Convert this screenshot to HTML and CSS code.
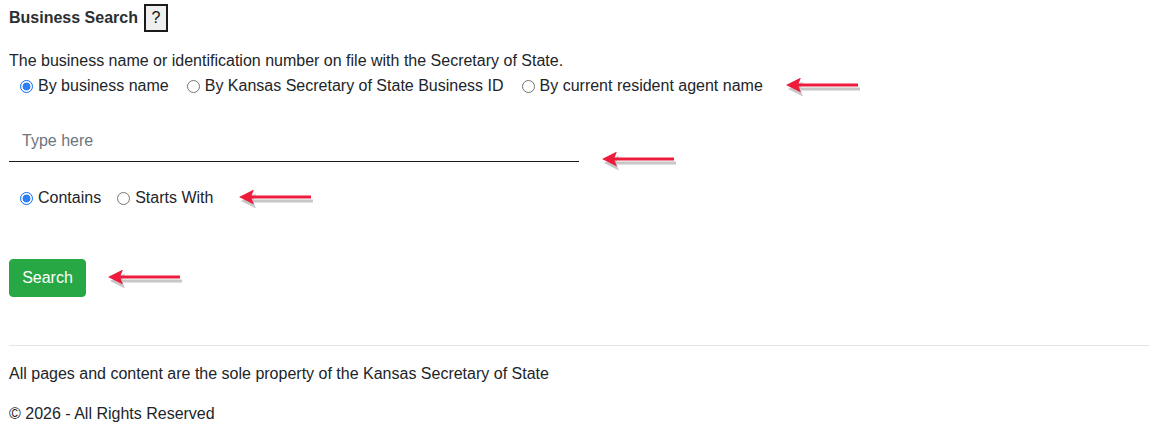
FILE: index.html
```html
<!DOCTYPE html>
<html>
<head>
<meta charset="utf-8">
<link rel="stylesheet" href="styles.css">
</head>
<body>
<main class="page">
  <div class="title-row">
    <span class="title">Business Search</span>
    <button class="help">?</button>
  </div>
  <p class="desc">The business name or identification number on file with the Secretary of State.</p>
  <div class="radio-row type-row">
    <label class="opt"><span class="radio checked"></span>By business name</label>
    <label class="opt"><span class="radio"></span>By Kansas Secretary of State Business ID</label>
    <label class="opt"><span class="radio"></span>By current resident agent name</label>
    <svg class="arrow arrow-1" width="76" height="20" viewBox="0 0 76 20"><g transform="translate(2,3)" fill="#9a9a9a" opacity="0.55"><rect x="10" y="6.5" width="62" height="3"/><polygon points="0,8 15,0.5 12,8 15,15.5"/></g><g fill="#ee1c3c"><rect x="10" y="5.5" width="62" height="3"/><polygon points="0,7 15,-0.5 12,7 15,14.5"/></g></svg>
  </div>
  <div class="input-row">
    <input class="search-input" type="text" placeholder="Type here">
    <svg class="arrow arrow-2" width="76" height="20" viewBox="0 0 76 20"><g transform="translate(2,3)" fill="#9a9a9a" opacity="0.55"><rect x="10" y="6.5" width="62" height="3"/><polygon points="0,8 15,0.5 12,8 15,15.5"/></g><g fill="#ee1c3c"><rect x="10" y="5.5" width="62" height="3"/><polygon points="0,7 15,-0.5 12,7 15,14.5"/></g></svg>
  </div>
  <div class="radio-row match-row">
    <label class="opt"><span class="radio checked"></span>Contains</label>
    <label class="opt"><span class="radio"></span>Starts With</label>
    <svg class="arrow arrow-3" width="76" height="20" viewBox="0 0 76 20"><g transform="translate(2,3)" fill="#9a9a9a" opacity="0.55"><rect x="10" y="6.5" width="62" height="3"/><polygon points="0,8 15,0.5 12,8 15,15.5"/></g><g fill="#ee1c3c"><rect x="10" y="5.5" width="62" height="3"/><polygon points="0,7 15,-0.5 12,7 15,14.5"/></g></svg>
  </div>
  <div class="button-row">
    <button class="search-btn">Search</button>
    <svg class="arrow arrow-4" width="76" height="20" viewBox="0 0 76 20"><g transform="translate(2,3)" fill="#9a9a9a" opacity="0.55"><rect x="10" y="6.5" width="62" height="3"/><polygon points="0,8 15,0.5 12,8 15,15.5"/></g><g fill="#ee1c3c"><rect x="10" y="5.5" width="62" height="3"/><polygon points="0,7 15,-0.5 12,7 15,14.5"/></g></svg>
  </div>
  <footer class="footer">
    <p>All pages and content are the sole property of the Kansas Secretary of State</p>
    <p>© 2026 - All Rights Reserved</p>
  </footer>
</main>
</body>
</html>
```
FILE: styles.css
```css
* { box-sizing: border-box; }
html, body { margin: 0; padding: 0; background: #fff; }
body {
  font-family: "Liberation Sans", Arial, sans-serif;
  font-size: 16px;
  color: #212529;
}
.page { padding: 0 9px; }
.title-row {
  display: flex;
  align-items: center;
  height: 36px;
}
.title {
  font-weight: bold;
  font-size: 16px;
  color: #2b2f33;
  margin-right: 6px;
}
.help {
  width: 24px;
  height: 28px;
  padding: 0;
  border: 2px solid #1a1a1a;
  border-radius: 0;
  background: #efefef;
  font-family: "Liberation Sans", Arial, sans-serif;
  font-size: 16px;
  color: #111;
}
.desc {
  margin: 16px 0 0 0;
  line-height: 18px;
}
.radio-row {
  display: flex;
  align-items: center;
  padding-left: 11px;
  height: 22px;
}
.type-row { margin-top: 5px; }
.opt {
  display: flex;
  align-items: center;
  margin-right: 18px;
  line-height: 20px;
}
.radio {
  width: 13px;
  height: 13px;
  border-radius: 50%;
  border: 1px solid #767676;
  background: #fff;
  margin-right: 5px;
  flex: none;
}
.radio.checked {
  border: 1px solid #0b6cf3;
  background: radial-gradient(circle, #2f80f6 0 3.6px, #fff 4.3px);
}
.arrow { display: block; flex: none; }
.arrow-1 { margin-left: 5px; margin-top: 4px; }
.input-row {
  display: flex;
  align-items: flex-end;
  margin-top: 23px;
}
.search-input {
  width: 570px;
  height: 42px;
  border: none;
  border-bottom: 1.5px solid #1a1a1a;
  outline: none;
  padding: 0 13px;
  font-family: "Liberation Sans", Arial, sans-serif;
  font-size: 16px;
  color: #212529;
  background: transparent;
}
.search-input::placeholder { color: #6c757d; }
.arrow-2 { margin-left: 23px; margin-bottom: -10px; }
.match-row { margin-top: 25px; }
.match-row .opt { margin-right: 16px; }
.arrow-3 { margin-left: 10px; margin-top: 4px; }
.button-row {
  display: flex;
  align-items: center;
  margin-top: 50px;
}
.search-btn {
  width: 77px;
  height: 38px;
  background: #28a745;
  border: 1px solid #28a745;
  border-radius: 4px;
  color: #fff;
  font-family: "Liberation Sans", Arial, sans-serif;
  font-size: 16px;
  padding: 0;
}
.arrow-4 { margin-left: 22px; margin-top: 4px; }
.footer {
  margin-top: 48px;
  border-top: 1px solid #e5e5e5;
  padding-top: 19px;
}
.footer p {
  margin: 0 0 22px 0;
  line-height: 18px;
  color: #212529;
}
```
